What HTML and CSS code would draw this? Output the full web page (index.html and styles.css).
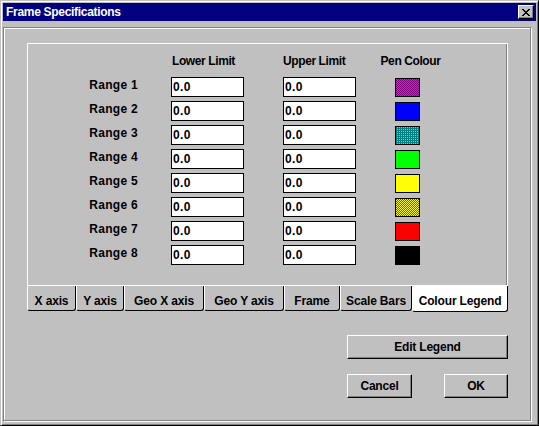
FILE: index.html
```html
<!DOCTYPE html>
<html>
<head>
<meta charset="utf-8">
<title>Frame Specifications</title>
<link rel="stylesheet" href="styles.css">
</head>
<body>
<div class="window">
  <div class="titlebar">
    <span class="title">Frame Specifications</span>
    <button class="close" aria-label="Close">
      <svg width="8" height="7" viewBox="0 0 8 7" shape-rendering="crispEdges"><path d="M0 0h2v1h-2zM6 0h2v1h-2zM1 1h2v1h-2zM5 1h2v1h-2zM2 2h4v1h-4zM3 3h2v1h-2zM2 4h4v1h-4zM1 5h2v1h-2zM5 5h2v1h-2zM0 6h2v1h-2zM6 6h2v1h-2z" fill="#000"/></svg>
    </button>
  </div>
  <div class="frame">
    <div class="panel">
      <div class="grid">
        <div></div>
        <div class="head head-l">Lower Limit</div>
        <div class="head">Upper Limit</div>
        <div class="head head-c"><span>Pen Colour</span></div>

        <div class="label">Range 1</div>
        <input class="field" type="text" value="0.0">
        <input class="field" type="text" value="0.0">
        <div class="sw sw-magenta"></div>

        <div class="label">Range 2</div>
        <input class="field" type="text" value="0.0">
        <input class="field" type="text" value="0.0">
        <div class="sw sw-blue"></div>

        <div class="label">Range 3</div>
        <input class="field" type="text" value="0.0">
        <input class="field" type="text" value="0.0">
        <div class="sw sw-cyan"></div>

        <div class="label">Range 4</div>
        <input class="field" type="text" value="0.0">
        <input class="field" type="text" value="0.0">
        <div class="sw sw-green"></div>

        <div class="label">Range 5</div>
        <input class="field" type="text" value="0.0">
        <input class="field" type="text" value="0.0">
        <div class="sw sw-yellow"></div>

        <div class="label">Range 6</div>
        <input class="field" type="text" value="0.0">
        <input class="field" type="text" value="0.0">
        <div class="sw sw-olive"></div>

        <div class="label">Range 7</div>
        <input class="field" type="text" value="0.0">
        <input class="field" type="text" value="0.0">
        <div class="sw sw-red"></div>

        <div class="label">Range 8</div>
        <input class="field" type="text" value="0.0">
        <input class="field" type="text" value="0.0">
        <div class="sw sw-black"></div>
      </div>
    </div>
    <div class="tabs">
      <div class="tab t-x">X axis</div>
      <div class="tab t-y">Y axis</div>
      <div class="tab t-gx">Geo X axis</div>
      <div class="tab t-gy">Geo Y axis</div>
      <div class="tab t-fr">Frame</div>
      <div class="tab t-sb">Scale Bars</div>
      <div class="tab t-cl sel">Colour Legend</div>
    </div>
    <div class="actions">
      <button class="btn wide">Edit Legend</button>
      <div class="pair">
        <button class="btn cancel">Cancel</button>
        <button class="btn ok">OK</button>
      </div>
    </div>
  </div>
</div>
</body>
</html>
```

FILE: styles.css
```css
html, body {
  margin: 0;
  padding: 0;
  background: #c0c0c0;
}

body {
  font-family: "Liberation Sans", Arial, sans-serif;
  font-weight: bold;
  font-size: 12px;
  line-height: 14px;
  color: #000;
}

.window {
  width: 539px;
  height: 426px;
  box-sizing: border-box;
  border: 1px solid;
  border-color: #c0c0c0 #000 #000 #c0c0c0;
  box-shadow: inset 1px 1px #fff, inset -1px -1px #808080;
  padding: 2px;
  display: flex;
  flex-direction: column;
  background: #c0c0c0;
}

.titlebar {
  flex: none;
  height: 18px;
  background: #000080;
  color: #fff;
  display: flex;
  align-items: center;
  justify-content: space-between;
  padding-left: 3px;
}

.title {
  letter-spacing: -0.3px;
}

.close {
  width: 16px;
  height: 14px;
  margin: 0 2px 0 0;
  padding: 0;
  box-sizing: border-box;
  border: 1px solid;
  border-color: #fff #000 #000 #fff;
  box-shadow: inset -1px -1px #808080;
  background: #c0c0c0;
  display: flex;
  align-items: center;
  justify-content: center;
}

.close svg {
  display: block;
}

.frame {
  flex: 1;
  margin: 6px 5px 2px 0;
  border: 1px solid #808080;
  box-shadow: inset 1px 1px #fff, 1px 1px #fff;
  padding: 15px 22px 0 23px;
  display: flex;
  flex-direction: column;
}

.panel {
  flex: none;
  height: 243px;
  box-sizing: border-box;
  border: 1px solid #fff;
  box-shadow: inset -1px 0 #808080;
  padding-top: 10px;
}

.grid {
  display: grid;
  grid-template-columns: 143px 112px 112px 25px;
  grid-template-rows: 19px repeat(8, 20px);
  row-gap: 4px;
}

.head {
  letter-spacing: -0.4px;
}

.head-l {
  padding-left: 1px;
}

.head-c {
  display: flex;
  justify-content: center;
  padding-left: 6px;
  white-space: nowrap;
}

.label {
  text-align: right;
  padding-right: 33px;
  padding-top: 1px;
  letter-spacing: 0.3px;
}

.field {
  width: 73px;
  height: 20px;
  box-sizing: border-box;
  margin: 0;
  border: 1px solid #000;
  background: #fff;
  padding: 0 0 0 1px;
  font: inherit;
  letter-spacing: 0.4px;
  color: #000;
  outline: none;
}

.sw {
  width: 25px;
  height: 19px;
  box-sizing: border-box;
  border: 1px solid #000;
  margin-top: 1px;
}

.sw-magenta {
  background: conic-gradient(#800080 0 25%, #ff00ff 0 50%, #800080 0 75%, #ff00ff 0) 0 0 / 2px 2px;
}

.sw-blue { background: #0000ff; }

.sw-cyan {
  background: conic-gradient(#00ffff 0 25%, #008080 0) 0 0 / 2px 2px;
}

.sw-green { background: #00ff00; }
.sw-yellow { background: #ffff00; }

.sw-olive {
  background: conic-gradient(#ffff00 0 25%, #ff0000 0 50%, #ffff00 0 75%, #ff0000 0) 0 0 / 2px 2px;
}

.sw-red { background: #ff0000; }
.sw-black { background: #000; }

.tabs {
  flex: none;
  display: flex;
  height: 25px;
}

.tab {
  box-sizing: border-box;
  height: 25px;
  border-left: 1px solid #fff;
  border-right: 1px solid #000;
  border-bottom: 1px solid #000;
  border-radius: 0 0 3px 3px;
  text-align: center;
  padding-top: 8px;
  letter-spacing: -0.15px;
  white-space: nowrap;
}

.t-x { width: 49px; }
.t-y { width: 48px; }
.t-gx { width: 80px; }
.t-gy { width: 80px; }
.t-fr { width: 56px; }
.t-sb { width: 72px; }
.t-cl { width: 96px; }

.tab.sel {
  background: #fff;
  height: 26px;
}

.actions {
  display: flex;
  flex-direction: column;
  align-items: flex-end;
  margin-top: 24px;
  gap: 15px;
}

.pair {
  display: flex;
  gap: 32px;
}

.btn {
  height: 24px;
  box-sizing: border-box;
  margin: 0;
  padding: 0;
  border: 1px solid;
  border-color: #fff #000 #000 #fff;
  box-shadow: inset -1px -1px #808080;
  background: #c0c0c0;
  font: inherit;
  letter-spacing: -0.2px;
  color: #000;
}

.wide { width: 161px; }
.cancel { width: 65px; }
.ok { width: 64px; }
```
